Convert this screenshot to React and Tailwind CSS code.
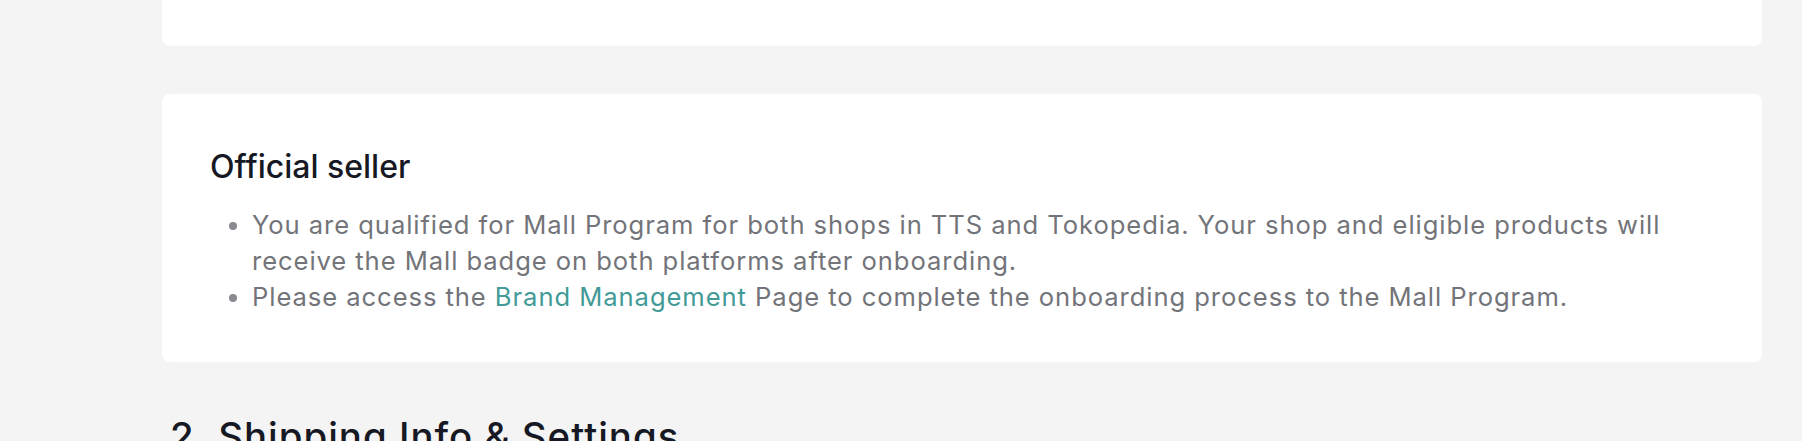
export default function App() {
  return (
    <div
      className="min-h-[441px] w-full overflow-hidden bg-[#f4f4f4] pl-[162px] pr-[40px]"
      style={{ fontFamily: "Inter, 'Noto Sans', sans-serif" }}
    >
      <div className="h-[46px] rounded-b-lg bg-white" />
      <div className="mt-[48px] rounded-lg bg-white px-[48px] pt-[49px] pb-[47px]">
        <h3 className="text-[32px] leading-[48px] font-medium text-[#161823]">
          Official seller
        </h3>
        <ul className="mt-[16px] list-disc pl-[42px] text-[25.6px] leading-[36px] tracking-[0.93px] text-[#737479] marker:text-[#8a8b90]">
          <li>
            You are qualified for Mall Program for both shops in TTS and Tokopedia. Your shop and eligible products will
            receive the Mall badge on both platforms after onboarding.
          </li>
          <li>
            Please access the{" "}
            <a className="text-[#429b97]" href="#">
              Brand Management
            </a>{" "}
            Page to complete the onboarding process to the Mall Program.
          </li>
        </ul>
      </div>
      <h2 className="mt-[51px] pl-[8px] text-[38.4px] leading-[1.21] font-medium tracking-[1px] text-[#161823]">
        2. Shipping Info &amp; Settings
      </h2>
    </div>
  );
}
